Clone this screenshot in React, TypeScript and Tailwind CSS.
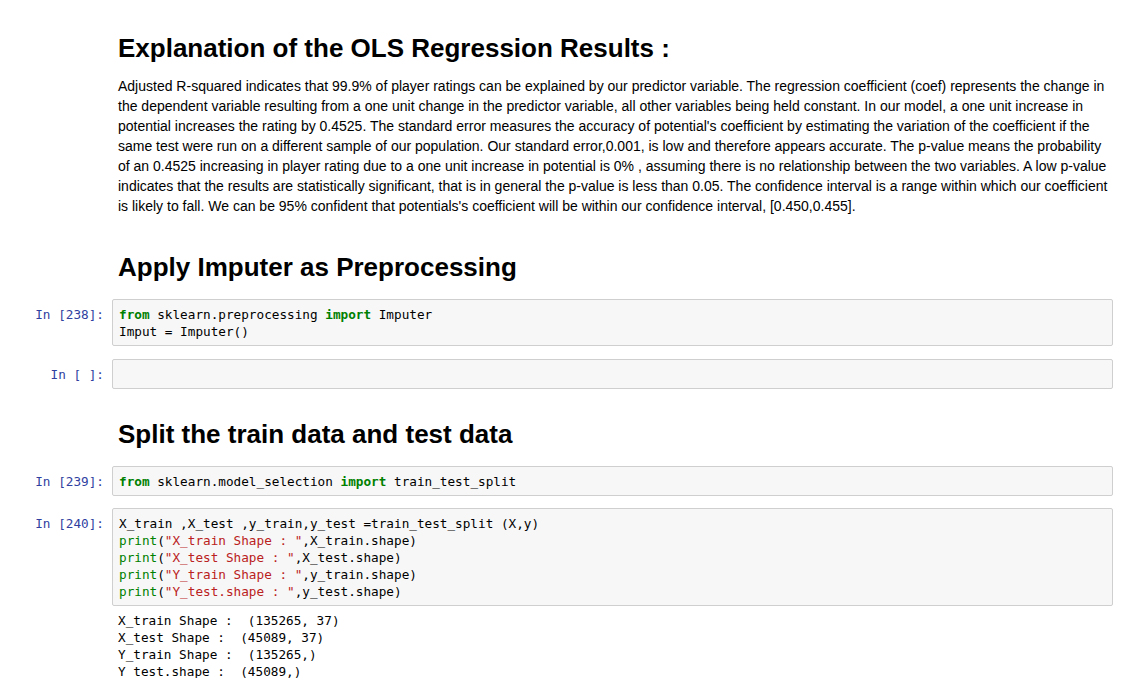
const mono = "font-['DejaVu_Sans_Mono',monospace] text-[12.7px] leading-[17px]";

function Prompt({ n }: { n?: string }) {
  return (
    <div className={`w-[112px] shrink-0 pr-[8px] text-right text-[#303f9f] ${mono}`}>
      In [{n ?? "\u00a0"}]:
    </div>
  );
}

function CodeCell({ n, children }: { n?: string; children?: React.ReactNode }) {
  return (
    <div className="flex items-start">
      <div className="pt-[7px]">
        <Prompt n={n} />
      </div>
      <div
        className={`w-[1001px] min-h-[30px] rounded-[2px] border border-[#cfcfcf] bg-[#f7f7f7] pl-[6px] pt-[6px] pb-[5px] text-black whitespace-pre ${mono}`}
      >
        {children}
      </div>
    </div>
  );
}

const K = ({ children }: { children: React.ReactNode }) => (
  <span className="font-bold text-[#008000]">{children}</span>
);
const B = ({ children }: { children: React.ReactNode }) => (
  <span className="text-[#008000]">{children}</span>
);
const S = ({ children }: { children: React.ReactNode }) => (
  <span className="text-[#ba2121]">{children}</span>
);

function Heading({ children }: { children: React.ReactNode }) {
  return (
    <h1 className="pl-[118px] font-['Liberation_Sans',Arial,sans-serif] text-[26px] font-bold leading-[32px] text-black">
      {children}
    </h1>
  );
}

export default function App() {
  return (
    <div className="min-h-[678px] w-[1127px] bg-white pt-[32px] text-black">
      <Heading>Explanation of the OLS Regression Results :</Heading>
      <p className="mt-[12px] w-[1120px] pl-[118px] pr-[10px] font-['Liberation_Sans',Arial,sans-serif] text-[14px] leading-[20px]">
        Adjusted R-squared indicates that 99.9% of player ratings can be explained by our predictor variable. The
        regression coefficient (coef) represents the change in the dependent variable resulting from a one unit change
        in the predictor variable, all other variables being held constant. In our model, a one unit increase in
        potential increases the rating by 0.4525. The standard error measures the accuracy of potential's coefficient
        by estimating the variation of the coefficient if the same test were run on a different sample of our
        population. Our standard error,0.001, is low and therefore appears accurate. The p-value means the probability
        of an 0.4525 increasing in player rating due to a one unit increase in potential is 0% , assuming there is no
        relationship between the two variables. A low p-value indicates that the results are statistically
        significant, that is in general the p-value is less than 0.05. The confidence interval is a range within which
        our coefficient is likely to fall. We can be 95% confident that potentials's coefficient will be within our
        confidence interval, [0.450,0.455].
      </p>

      <div className="mt-[35px]">
        <Heading>Apply Imputer as Preprocessing</Heading>
      </div>

      <div className="mt-[16px]">
        <CodeCell n="238">
          <K>from</K> sklearn.preprocessing <K>import</K> Imputer{"\n"}Imput = Imputer()
        </CodeCell>
      </div>

      <div className="mt-[13px]">
        <CodeCell />
      </div>

      <div className="mt-[29px]">
        <Heading>Split the train data and test data</Heading>
      </div>

      <div className="mt-[16px]">
        <CodeCell n="239">
          <K>from</K> sklearn.model_selection <K>import</K> train_test_split
        </CodeCell>
      </div>

      <div className="mt-[12px]">
        <CodeCell n="240">
          X_train ,X_test ,y_train,y_test =train_test_split (X,y){"\n"}
          <B>print</B>(<S>"X_train Shape : "</S>,X_train.shape){"\n"}
          <B>print</B>(<S>"X_test Shape : "</S>,X_test.shape){"\n"}
          <B>print</B>(<S>"Y_train Shape : "</S>,y_train.shape){"\n"}
          <B>print</B>(<S>"Y_test.shape : "</S>,y_test.shape)
        </CodeCell>
      </div>

      <pre className={`mt-[6px] pl-[118px] text-black ${mono}`}>
        {"X_train Shape :  (135265, 37)\nX_test Shape :  (45089, 37)\nY_train Shape :  (135265,)\nY_test.shape :  (45089,)"}
      </pre>
    </div>
  );
}
